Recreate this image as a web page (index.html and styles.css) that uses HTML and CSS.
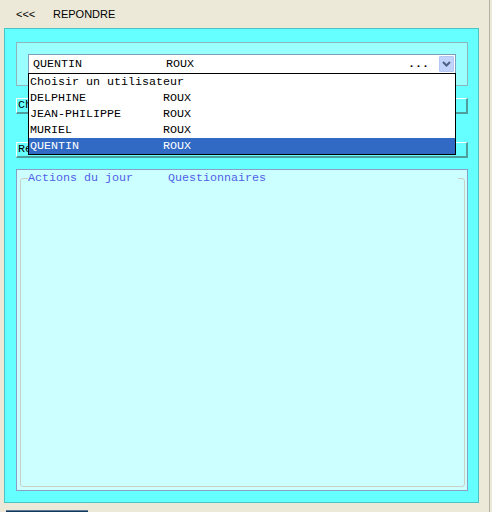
FILE: index.html
```html
<!DOCTYPE html>
<html>
<head>
<meta charset="utf-8">
<link rel="stylesheet" href="styles.css">
</head>
<body>
<div class="app">
  <div class="header">
    <span class="back">&lt;&lt;&lt;</span>
    <span class="title">REPONDRE</span>
  </div>
  <div class="panel">
    <div class="top-panel">
      <div class="combo">
        <span class="first">QUENTIN</span><span class="last">ROUX</span>
        <span class="dots">...</span>
        <span class="drop-btn">
          <svg width="9" height="6" viewBox="0 0 9 6"><path d="M1 1 L4.5 4.5 L8 1" fill="none" stroke="#4D6185" stroke-width="2"/></svg>
        </span>
        <div class="list">
          <div class="row">Choisir un utilisateur</div>
          <div class="row"><span class="first">DELPHINE</span><span class="last">ROUX</span></div>
          <div class="row"><span class="first">JEAN-PHILIPPE</span><span class="last">ROUX</span></div>
          <div class="row"><span class="first">MURIEL</span><span class="last">ROUX</span></div>
          <div class="row selected"><span class="first">QUENTIN</span><span class="last">ROUX</span></div>
        </div>
      </div>
    </div>
    <div class="btn btn-first">Ch</div>
    <div class="btn btn-second">Re</div>
    <div class="content">
      <fieldset class="group">
        <legend class="tabs"><span class="tab">Actions du jour</span><span class="tab">Questionnaires</span></legend>
      </fieldset>
    </div>
  </div>
  <div class="taskbar"></div>
</div>
</body>
</html>
```

FILE: styles.css
```css
html, body {
  margin: 0;
  padding: 0;
}
body {
  background: #ECE9D8;
  width: 492px;
  height: 512px;
  overflow: hidden;
}
.app {
  width: 489px;
  height: 512px;
  border-right: 1px solid #B3B1A6;
  box-sizing: content-box;
}
.header {
  height: 28px;
  box-sizing: border-box;
  padding: 8px 0 0 16px;
  font-family: "Liberation Sans", Arial, sans-serif;
  font-size: 11px;
  line-height: 13px;
  color: #000;
  display: flex;
}
.back {
  width: 37px;
}
.panel {
  margin-left: 4px;
  width: 475px;
  height: 475px;
  box-sizing: border-box;
  background: #66FFFF;
  border: 1px solid #4EC3C3;
  padding: 13px 0 0 11px;
  display: flex;
  flex-direction: column;
}
.top-panel {
  width: 452px;
  height: 44px;
  box-sizing: border-box;
  background: #99FFFF;
  border: 1px solid #8DB5BA;
  padding: 11px 0 0 11px;
  position: relative;
  z-index: 2;
}
.combo {
  position: relative;
  width: 428px;
  height: 20px;
  box-sizing: border-box;
  background: #fff;
  border: 1px solid #7F9DB9;
  display: flex;
  align-items: center;
  padding-left: 4px;
  font-family: "Liberation Mono", "Courier New", monospace;
  font-size: 11.67px;
  line-height: 14px;
  color: #000;
}
.first {
  display: inline-block;
  width: 133px;
}
.dots {
  margin-left: auto;
  margin-right: 10px;
  font-weight: bold;
  letter-spacing: 0;
}
.drop-btn {
  width: 15px;
  height: 16px;
  box-sizing: border-box;
  margin-right: 1px;
  background: #C1D3FB;
  border: 1px solid #B5C8F4;
  border-radius: 1px;
  display: flex;
  align-items: center;
  justify-content: center;
}
.list {
  position: absolute;
  left: -1px;
  top: 18px;
  width: 428px;
  box-sizing: border-box;
  border: 1px solid #000;
  background: #fff;
}
.row {
  height: 16px;
  line-height: 16px;
  padding-left: 1px;
  white-space: pre;
}
.row.selected {
  background: #316AC5;
  color: #fff;
}
.btn {
  width: 452px;
  height: 16px;
  box-sizing: border-box;
  background: #66FFFF;
  border-top: 1px solid #FFFFFF;
  border-left: 1px solid #FFFFFF;
  border-right: 2px solid #4E9E9E;
  border-bottom: 2px solid #4E9E9E;
  font-family: "Liberation Mono", "Courier New", monospace;
  font-size: 11.67px;
  line-height: 13px;
  padding-left: 1px;
  color: #000;
}
.btn-first {
  margin-top: 12px;
}
.btn-second {
  margin-top: 28px;
}
.content {
  margin-top: 11px;
  width: 452px;
  height: 322px;
  box-sizing: border-box;
  background: #CCFFFF;
  border: 1px solid #8A9FC8;
  padding: 1px 2px 3px 3px;
}
.group {
  margin: 0;
  padding: 0;
  height: 100%;
  box-sizing: border-box;
  border: 1px solid #C9CFC4;
  border-radius: 3px;
}
.tabs {
  padding: 0;
  margin-left: 7px;
  width: 430px;
  font-family: "Liberation Mono", "Courier New", monospace;
  font-size: 11.67px;
  line-height: 14px;
  color: #5060E8;
  white-space: pre;
}
.tab:first-child {
  display: inline-block;
  width: 140px;
}
.taskbar {
  margin: 7px 0 0 6px;
  width: 82px;
  height: 3px;
  background: #12395C;
  border-top: 1px solid #5C7A96;
}
```
